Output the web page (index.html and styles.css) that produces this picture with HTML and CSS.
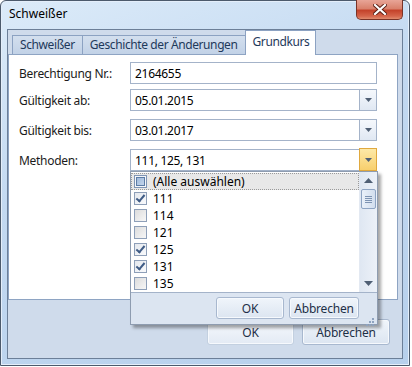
FILE: index.html
```html
<!DOCTYPE html>
<html lang="de">
<head>
    <meta charset="UTF-8">
    <title>Schweißer</title>
    <link rel="stylesheet" href="styles.css">
</head>
<body>

<div class="window">
    <div class="titlebar">
        <span class="title">Schweißer</span>
        <div class="close-btn">
            <svg width="14" height="11" viewBox="0 0 14 11">
                <path d="M2 1 L12 10 M12 1 L2 10" stroke="#5a1d12" stroke-width="4" stroke-linecap="square"/>
                <path d="M2 1 L12 10 M12 1 L2 10" stroke="#ffffff" stroke-width="2.2" stroke-linecap="square"/>
            </svg>
        </div>
    </div>

    <div class="client">
        <div class="tabs">
            <div class="tab">Schweißer</div>
            <div class="tab">Geschichte der Änderungen</div>
            <div class="tab active">Grundkurs</div>
        </div>

        <div class="panel">
            <div class="row">
                <label>Berechtigung Nr.:</label>
                <div class="field">2164655</div>
            </div>
            <div class="row">
                <label>Gültigkeit ab:</label>
                <div class="field combo">
                    <span class="value">05.01.2015</span>
                    <span class="drop">
                        <svg width="7" height="4" viewBox="0 0 7 4"><path d="M0 0 H7 L3.5 4 Z" fill="#4f5f74"/></svg>
                    </span>
                </div>
            </div>
            <div class="row">
                <label>Gültigkeit bis:</label>
                <div class="field combo">
                    <span class="value">03.01.2017</span>
                    <span class="drop">
                        <svg width="7" height="4" viewBox="0 0 7 4"><path d="M0 0 H7 L3.5 4 Z" fill="#4f5f74"/></svg>
                    </span>
                </div>
            </div>
            <div class="row">
                <label>Methoden:</label>
                <div class="field combo open">
                    <span class="value">111, 125, 131</span>
                    <span class="drop hot">
                        <svg width="7" height="4" viewBox="0 0 7 4"><path d="M0 0 H7 L3.5 4 Z" fill="#4f5f74"/></svg>
                    </span>

                    <!-- checked list dropdown -->
                    <div class="popup">
                        <div class="list-wrap">
                            <ul class="list">
                                <li class="item focused"><span class="check partial"></span>(Alle auswählen)</li>
                                <li class="item"><span class="check checked"></span>111</li>
                                <li class="item"><span class="check"></span>114</li>
                                <li class="item"><span class="check"></span>121</li>
                                <li class="item"><span class="check checked"></span>125</li>
                                <li class="item"><span class="check checked"></span>131</li>
                                <li class="item"><span class="check"></span>135</li>
                            </ul>
                            <div class="scrollbar">
                                <div class="arrow">
                                    <svg width="9" height="5" viewBox="0 0 9 5"><path d="M0 5 H9 L4.5 0 Z" fill="#4f5f74"/></svg>
                                </div>
                                <div class="thumb"><span></span><span></span><span></span><span></span></div>
                                <div class="track"></div>
                                <div class="arrow">
                                    <svg width="9" height="5" viewBox="0 0 9 5"><path d="M0 0 H9 L4.5 5 Z" fill="#4f5f74"/></svg>
                                </div>
                            </div>
                        </div>
                        <div class="popup-footer">
                            <button class="btn small">OK</button>
                            <button class="btn small wide">Abbrechen</button>
                            <svg class="grip" width="10" height="10" viewBox="0 0 10 10">
                                <rect x="7" y="1" width="2" height="2" fill="#8fa3bf"/>
                                <rect x="4" y="4" width="2" height="2" fill="#8fa3bf"/>
                                <rect x="7" y="4" width="2" height="2" fill="#8fa3bf"/>
                                <rect x="1" y="7" width="2" height="2" fill="#8fa3bf"/>
                                <rect x="4" y="7" width="2" height="2" fill="#8fa3bf"/>
                                <rect x="7" y="7" width="2" height="2" fill="#8fa3bf"/>
                            </svg>
                        </div>
                    </div>
                </div>
            </div>
        </div>

        <div class="buttons">
            <button class="btn default">OK</button>
            <button class="btn">Abbrechen</button>
        </div>
    </div>
</div>

</body>
</html>
```

FILE: styles.css
```css
/* Page */
body {
    margin: 0;
    background: #ffffff;
    font-family: 'Noto Sans', 'Open Sans', sans-serif;
    font-size: 12px;
    color: #1b1b1b;
}

/* Window frame */
.window {
    position: relative;
    width: 410px;
    height: 366px;
    box-sizing: border-box;
    border: 1px solid #4c5a6c;
    border-radius: 6px 6px 0 0;
    padding: 0 6px 6px 6px;
    background: linear-gradient(160deg, #dcebf9 0%, #c3d9f1 40%, #b7d0ec 100%);
    box-shadow: inset 0 0 0 1px #e4eefa;
}

.titlebar {
    height: 28px;
    display: flex;
    align-items: center;
}

.title {
    padding-left: 2px;
    margin-top: -4px;
    color: #000;
}

.close-btn {
    position: absolute;
    top: -1px;
    right: 6px;
    width: 45px;
    height: 19px;
    border: 1px solid #7a3327;
    border-top: none;
    border-radius: 0 0 5px 5px;
    background: linear-gradient(#e8a597 0%, #d9816c 45%, #c4432b 55%, #d5654b 85%, #e08c6f 100%);
    display: flex;
    justify-content: center;
    align-items: center;
}

/* Client area */
.client {
    height: 330px;
    box-sizing: border-box;
    border: 1px solid #6c7f98;
    background: #cfdbeb;
}

/* Tabs */
.tabs {
    height: 24px;
    display: flex;
    align-items: flex-end;
    padding-left: 4px;
}

.tab {
    height: 19px;
    box-sizing: border-box;
    padding: 0 7px;
    border: 1px solid #8ca2c2;
    border-bottom: none;
    border-right: none;
    background: linear-gradient(#d3dfee, #c2d2e7);
    color: #1e395b;
    line-height: 18px;
    letter-spacing: -0.4px;
}

.tab.active {
    padding: 2px 6px 0 7px;
    border-right: 1px solid #8ca2c2;
    background: #ffffff;
    position: relative;
    z-index: 1;
    margin-bottom: -1px;
    height: 25px;
}

/* Tab page */
.panel {
    width: 390px;
    height: 246px;
    box-sizing: border-box;
    border: 1px solid #8ea4c3;
    background: #ffffff;
    padding: 7px 20px 0 10px;
}

.row {
    display: flex;
    align-items: center;
    margin-top: 8px;
}

.row:first-child {
    margin-top: 0;
}

.row:nth-child(2) {
    margin-top: 5px;
}

.row label {
    width: 111px;
    letter-spacing: -0.3px;
}

.field {
    position: relative;
    width: 247px;
    height: 22px;
    box-sizing: border-box;
    border: 1px solid #a4b3c9;
    padding-left: 4px;
    display: flex;
    align-items: center;
    color: #000;
    letter-spacing: -0.3px;
}

.combo .value {
    flex: 1;
}

.drop {
    width: 16px;
    height: 20px;
    border-left: 1px solid #a4b3c9;
    background: linear-gradient(#f5f8fc, #e0e8f3);
    display: flex;
    justify-content: center;
    align-items: center;
}

.drop.hot {
    background: linear-gradient(#fde9a8, #f8cf6d);
    border: 1px solid #e0a93f;
    height: 21px;
    margin: -1px -1px 0 0;
}

/* Checked list popup */
.popup {
    position: absolute;
    top: 21px;
    left: -1px;
    width: 248px;
    height: 154px;
    box-sizing: border-box;
    border: 1px solid #8e9cb0;
    background: #dce5f1;
    box-shadow: 3px 3px 3px rgba(0, 0, 0, 0.35);
    z-index: 5;
    letter-spacing: 0;
}

.list-wrap {
    display: flex;
    height: 120px;
    background: #ffffff;
    border-bottom: 1px solid #a4b3c9;
}

.list {
    list-style: none;
    margin: 0;
    padding: 1px 0 0 0;
    flex: 1;
}

.item {
    height: 17px;
    box-sizing: border-box;
    display: flex;
    align-items: center;
    padding-left: 3px;
    color: #000;
}

.item.focused {
    background: #e8e8e8;
    border: 1px dotted #9a9a9a;
    padding-left: 2px;
}

.check {
    width: 11px;
    height: 11px;
    border: 1px solid #8e9fb8;
    background: linear-gradient(135deg, #dcdcdc, #f7f7f7);
    margin-right: 6px;
    position: relative;
}

.check.partial {
    border-color: #7f95b5;
    background: #f4f6fa;
}

.check.partial::after {
    content: "";
    position: absolute;
    left: 1px;
    top: 1px;
    width: 7px;
    height: 7px;
    border: 1px solid #5c7ca6;
    background: linear-gradient(135deg, #9fb9da, #c3d5ec);
}

.check.checked {
    background: linear-gradient(135deg, #e4e8ee, #f9fafc);
}

.check.checked::after {
    content: "";
    position: absolute;
    left: 3px;
    top: 0;
    width: 3px;
    height: 7px;
    border: solid #3f5c86;
    border-width: 0 2px 2px 0;
    transform: rotate(40deg);
}

.scrollbar {
    width: 17px;
    display: flex;
    flex-direction: column;
    background: linear-gradient(90deg, #dfe7f2, #ecf1f8);
    border-left: 1px solid #e3e9f2;
}

.scrollbar .arrow {
    height: 17px;
    display: flex;
    justify-content: center;
    align-items: center;
}

.thumb {
    height: 18px;
    margin: 0 1px;
    border: 1px solid #8ea4c3;
    border-radius: 2px;
    background: linear-gradient(90deg, #e9f0f9, #d2deee);
    display: flex;
    flex-direction: column;
    justify-content: center;
    align-items: center;
    gap: 1px;
}

.thumb span {
    width: 7px;
    height: 1px;
    background: #7d93b2;
}

.scrollbar .track {
    flex: 1;
}

.popup-footer {
    height: 32px;
    display: flex;
    align-items: flex-start;
    justify-content: flex-end;
    padding: 4px 18px 0 0;
    gap: 5px;
    position: relative;
}

.grip {
    position: absolute;
    right: 2px;
    bottom: 2px;
}

/* Buttons */
.btn {
    font-family: 'Noto Sans', 'Open Sans', sans-serif;
    font-size: 12px;
    color: #1e2f47;
    border: 1px solid #a8b8cf;
    border-radius: 3px;
    background: linear-gradient(#f0f5fb, #dce5f1);
    box-shadow: inset 0 0 0 1px #f6f9fd;
    padding: 0;
    width: 88px;
    height: 26px;
    letter-spacing: -0.2px;
}

.btn.small {
    width: 68px;
    height: 22px;
}

.btn.small.wide {
    width: 70px;
}

.btn.default {
    width: 87px;
    border-color: #c3d0e0;
    background: linear-gradient(#f6f9fd, #e3eaf4);
}

.buttons {
    display: flex;
    justify-content: flex-end;
    gap: 8px;
    padding: 19px 12px 0 0;
}
```
